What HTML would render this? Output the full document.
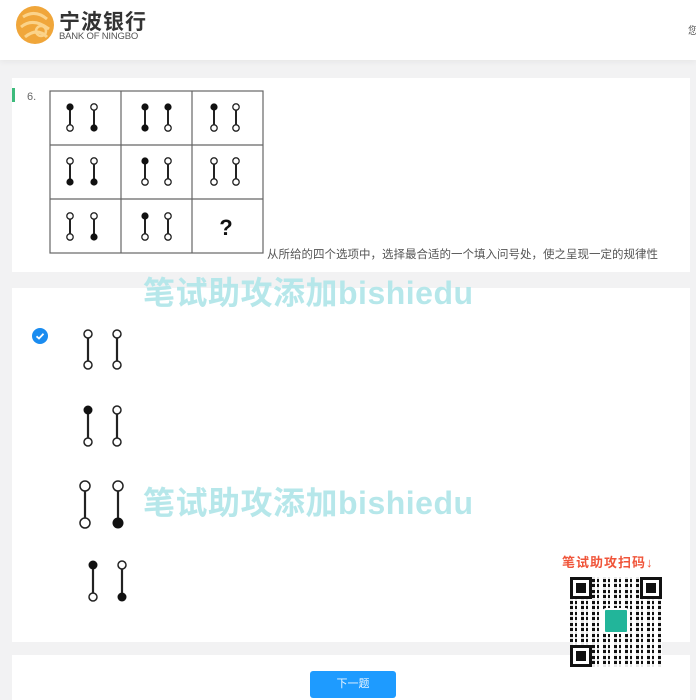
<!DOCTYPE html>
<html><head><meta charset="utf-8"><style>
*{margin:0;padding:0;box-sizing:border-box}
body{width:696px;height:700px;overflow:hidden;background:#f2f2f3;font-family:"Liberation Sans","Noto Sans CJK SC",sans-serif;position:relative}
.hdr{position:absolute;left:0;top:0;width:696px;height:60px;background:#fff;box-shadow:0 2px 6px rgba(0,0,0,.05)}
.card{position:absolute;background:#fff}
.wm{position:absolute;color:#b6e7ea;font-weight:bold;font-size:32px;letter-spacing:0.5px;white-space:nowrap;z-index:5}
.qr{position:absolute;z-index:6}
</style></head><body>
<div class="hdr">
<svg style="position:absolute;left:15px;top:5px" width="40" height="40" viewBox="0 0 40 40"><circle cx="20" cy="20" r="19" fill="#f0a63a"/><path d="M8 12 Q20 4 32 14 M6 22 Q18 12 34 24 M10 32 Q22 22 32 32" stroke="#fbd38a" stroke-width="3" fill="none"/><circle cx="26" cy="26" r="5" fill="none" stroke="#fbd38a" stroke-width="2.5"/></svg>
<div style="position:absolute;left:59px;top:6px;font-size:21px;color:#333;font-weight:bold;letter-spacing:1px">宁波银行</div>
<div style="position:absolute;left:59px;top:31px;font-size:9.5px;color:#555;letter-spacing:-.2px">BANK OF NINGBO</div>
<div style="position:absolute;left:688px;top:22px;font-size:10px;color:#555">您</div>
</div>
<div class="card" style="left:12px;top:78px;width:678px;height:194px"></div>
<div style="position:absolute;left:12px;top:88px;width:3px;height:14px;background:#3dbb7c"></div>
<div style="position:absolute;left:27px;top:91px;font-size:11px;color:#666">6.</div>
<svg style="position:absolute;left:0;top:0" width="696" height="700">
<defs>
<g id="w"><circle r="3.2" fill="#fff" stroke="#222" stroke-width="1.3"/></g>
<g id="b"><circle r="3.6" fill="#111"/></g>
</defs>
<g stroke="#666" stroke-width="1.2" fill="none">
<rect x="50" y="91" width="213" height="162"/>
<line x1="121" y1="91" x2="121" y2="253"/><line x1="192" y1="91" x2="192" y2="253"/>
<line x1="50" y1="145" x2="263" y2="145"/><line x1="50" y1="199" x2="263" y2="199"/>
</g>
<g stroke="#222" stroke-width="2">
<line x1="70" y1="107" x2="70" y2="128"/><line x1="94" y1="107" x2="94" y2="128"/>
<line x1="145" y1="107" x2="145" y2="128"/><line x1="168" y1="107" x2="168" y2="128"/>
<line x1="214" y1="107" x2="214" y2="128"/><line x1="236" y1="107" x2="236" y2="128"/>
<line x1="70" y1="161" x2="70" y2="182"/><line x1="94" y1="161" x2="94" y2="182"/>
<line x1="145" y1="161" x2="145" y2="182"/><line x1="168" y1="161" x2="168" y2="182"/>
<line x1="214" y1="161" x2="214" y2="182"/><line x1="236" y1="161" x2="236" y2="182"/>
<line x1="70" y1="216" x2="70" y2="237"/><line x1="94" y1="216" x2="94" y2="237"/>
<line x1="145" y1="216" x2="145" y2="237"/><line x1="168" y1="216" x2="168" y2="237"/>
</g>
<use href="#b" x="70" y="107"/><use href="#w" x="70" y="128"/><use href="#w" x="94" y="107"/><use href="#b" x="94" y="128"/>
<use href="#b" x="145" y="107"/><use href="#b" x="145" y="128"/><use href="#b" x="168" y="107"/><use href="#w" x="168" y="128"/>
<use href="#b" x="214" y="107"/><use href="#w" x="214" y="128"/><use href="#w" x="236" y="107"/><use href="#w" x="236" y="128"/>
<use href="#w" x="70" y="161"/><use href="#b" x="70" y="182"/><use href="#w" x="94" y="161"/><use href="#b" x="94" y="182"/>
<use href="#b" x="145" y="161"/><use href="#w" x="145" y="182"/><use href="#w" x="168" y="161"/><use href="#w" x="168" y="182"/>
<use href="#w" x="214" y="161"/><use href="#w" x="214" y="182"/><use href="#w" x="236" y="161"/><use href="#w" x="236" y="182"/>
<use href="#w" x="70" y="216"/><use href="#w" x="70" y="237"/><use href="#w" x="94" y="216"/><use href="#b" x="94" y="237"/>
<use href="#b" x="145" y="216"/><use href="#w" x="145" y="237"/><use href="#w" x="168" y="216"/><use href="#w" x="168" y="237"/>
<text x="226" y="235" font-size="22" font-weight="bold" text-anchor="middle" fill="#111" font-family="Liberation Sans">?</text>
</svg>
<div style="position:absolute;left:267px;top:246px;font-size:11.5px;color:#555;white-space:nowrap">从所给的四个选项中，选择最合适的一个填入问号处，使之呈现一定的规律性</div>
<div class="card" style="left:12px;top:288px;width:678px;height:354px"></div>
<svg style="position:absolute;left:32px;top:328px" width="16" height="16"><circle cx="8" cy="8" r="8" fill="#1a8cf0"/><path d="M4.5 8.3 L7 10.5 L11.5 5.8" stroke="#fff" stroke-width="1.8" fill="none"/></svg>
<svg style="position:absolute;left:0;top:0" width="696" height="700">
<g stroke="#222" stroke-width="2.2">
<line x1="88" y1="334" x2="88" y2="365"/><line x1="117" y1="334" x2="117" y2="365"/>
<line x1="88" y1="410" x2="88" y2="442"/><line x1="117" y1="410" x2="117" y2="442"/>
<line x1="85" y1="486" x2="85" y2="523"/><line x1="118" y1="486" x2="118" y2="523"/>
<line x1="93" y1="565" x2="93" y2="597"/><line x1="122" y1="565" x2="122" y2="597"/>
</g>
<g stroke="#222" stroke-width="1.5" fill="#fff">
<circle cx="88" cy="334" r="4"/><circle cx="88" cy="365" r="4"/><circle cx="117" cy="334" r="4"/><circle cx="117" cy="365" r="4"/>
<circle cx="88" cy="442" r="4"/><circle cx="117" cy="410" r="4"/><circle cx="117" cy="442" r="4"/>
<circle cx="85" cy="486" r="5"/><circle cx="85" cy="523" r="5"/><circle cx="118" cy="486" r="5"/>
<circle cx="93" cy="597" r="4"/><circle cx="122" cy="565" r="4"/>
</g>
<g fill="#111"><circle cx="88" cy="410" r="4.5"/><circle cx="118" cy="523" r="5.5"/><circle cx="93" cy="565" r="4.5"/><circle cx="122" cy="597" r="4.5"/></g>
</svg>
<div class="wm" style="left:143px;top:268px">笔试助攻添加bishiedu</div>
<div class="wm" style="left:143px;top:478px">笔试助攻添加bishiedu</div>
<div class="card" style="left:12px;top:655px;width:678px;height:45px"></div>
<div style="position:absolute;left:310px;top:671px;width:86px;height:27px;background:#1e9bff;border-radius:3px;color:#e8f4ff;font-size:11px;text-align:center;line-height:27px">下一题</div>
<div class="qr" style="left:562px;top:552px;font-size:13px;font-weight:bold;color:#f0553a;letter-spacing:1px">笔试助攻扫码↓</div>
<div class="qr" style="left:570px;top:577px;width:92px;height:90px;background:repeating-linear-gradient(90deg,#111 0 3px,#fff 3px 5px,#111 5px 7px,#fff 7px 11px),#fff;"></div>
<div class="qr" style="left:570px;top:577px;width:92px;height:90px;background:repeating-linear-gradient(0deg,rgba(255,255,255,.9) 0 3px,transparent 3px 6px,rgba(255,255,255,.85) 6px 8px,transparent 8px 11px)"></div>
<div class="qr" style="left:570px;top:577px;width:22px;height:22px;border:3px solid #111;background:#fff"><div style="margin:3px;width:10px;height:10px;background:#111"></div></div>
<div class="qr" style="left:640px;top:577px;width:22px;height:22px;border:3px solid #111;background:#fff"><div style="margin:3px;width:10px;height:10px;background:#111"></div></div>
<div class="qr" style="left:570px;top:645px;width:22px;height:22px;border:3px solid #111;background:#fff"><div style="margin:3px;width:10px;height:10px;background:#111"></div></div>
<div class="qr" style="left:603px;top:608px;width:26px;height:26px;background:#22b59a;border-radius:3px;border:2px solid #fff"></div>
</body></html>
